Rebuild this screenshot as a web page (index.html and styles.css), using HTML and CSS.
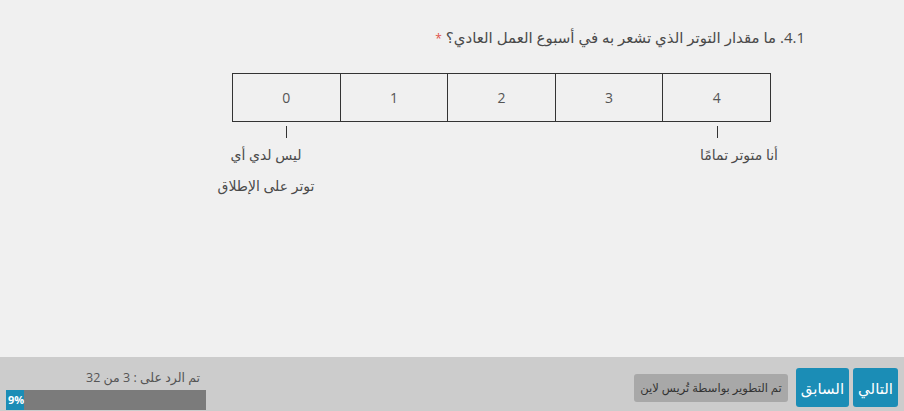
FILE: index.html
```html
<!DOCTYPE html>
<html lang="ar" dir="rtl">
<head>
<meta charset="utf-8">
<title>استبيان</title>
<link rel="stylesheet" href="styles.css">
</head>
<body>
<main class="page">
  <h1 class="question">4.1. ما مقدار التوتر الذي تشعر به في أسبوع العمل العادي؟ <span class="req">*</span></h1>
  <div class="scale">
    <div class="cells">
      <div class="cell">0</div>
      <div class="cell">1</div>
      <div class="cell">2</div>
      <div class="cell">3</div>
      <div class="cell">4</div>
    </div>
    <div class="anchors">
      <div class="anchor anchor-low">
        <span class="tick"></span>
        <p class="anchor-label">ليس لدي أي<br>توتر على الإطلاق</p>
      </div>
      <div class="anchor anchor-high">
        <span class="tick"></span>
        <p class="anchor-label">أنا متوتر تمامًا</p>
      </div>
    </div>
  </div>
</main>
<footer class="footer">
  <div class="nav">
    <button class="btn">التالي</button>
    <button class="btn">السابق</button>
    <span class="credit">تم التطوير بواسطة تُريس لاين</span>
  </div>
  <div class="progress">
    <div class="progress-text">تم الرد على : 3 من 32</div>
    <div class="bar"><div class="bar-fill" style="width:9%">9%</div></div>
  </div>
</footer>
</body>
</html>
```

FILE: styles.css
```css
html, body {
  margin: 0;
  padding: 0;
}

body {
  width: 904px;
  height: 411px;
  background: #f0f0f0;
  font-family: "Open Sans", "DejaVu Sans", sans-serif;
  color: #444;
  overflow: hidden;
}

.page {
  height: 357px;
  box-sizing: border-box;
  padding-top: 26px;
}

.question {
  margin: 0 99px 0 0;
  font-size: 15px;
  font-weight: normal;
  line-height: 22px;
  color: #4a4a4a;
}

.req {
  color: #e0504a;
  font-size: 12px;
}

.scale {
  direction: ltr;
  width: 539px;
  margin: 23px 133px 0 0;
}

.cells {
  display: flex;
  height: 49px;
  border: 1px solid #333;
  box-sizing: border-box;
}

.cell {
  flex: 1;
  display: flex;
  align-items: center;
  justify-content: center;
  font-size: 14px;
  color: #555;
  border-right: 1px solid #333;
}

.cell:last-child {
  border-right: none;
}

.anchors {
  display: flex;
  justify-content: space-between;
}

.anchor {
  width: 108px;
  display: flex;
  flex-direction: column;
  align-items: center;
}

.tick {
  display: block;
  width: 1px;
  height: 12px;
  margin-top: 4px;
  background: #333;
}

.anchor-label {
  direction: rtl;
  margin: 1px 0 0;
  font-size: 14px;
  line-height: 31px;
  text-align: center;
  white-space: nowrap;
  color: #4a4a4a;
}

.anchor-low .anchor-label {
  margin-right: 40px;
}

.anchor-high .anchor-label {
  margin-left: 44px;
}

.footer {
  height: 54px;
  background: #cccccc;
  display: flex;
  justify-content: space-between;
  align-items: flex-start;
  padding: 0 6px;
}

.nav {
  display: flex;
  align-items: center;
  gap: 4px;
  padding-top: 11px;
}

.btn {
  height: 39px;
  padding: 0 5px;
  border: none;
  border-radius: 3px;
  background: #1b8db6;
  color: #fff;
  font-family: inherit;
  font-size: 15px;
}

.credit {
  margin-right: 4px;
  height: 28px;
  line-height: 28px;
  padding: 0 6px;
  background: #a8a8a8;
  border-radius: 3px;
  font-size: 11.5px;
  color: #333;
}

.progress {
  width: 200px;
  padding-top: 12px;
}

.progress-text {
  font-size: 12.5px;
  line-height: 17px;
  color: #555;
  padding-right: 6px;
}

.bar {
  direction: ltr;
  margin-top: 4px;
  height: 20px;
  background: #7b7b7b;
}

.bar-fill {
  height: 100%;
  background: #1b8db6;
  color: #fff;
  font-size: 11px;
  font-weight: bold;
  line-height: 20px;
  padding-left: 2px;
  box-sizing: border-box;
}
```
